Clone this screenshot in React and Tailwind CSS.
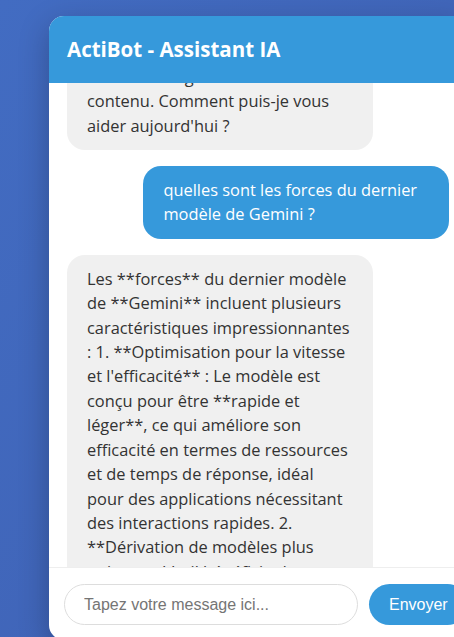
import { useLayoutEffect, useRef } from "react";

const messages = [
  {
    from: "bot",
    text: "Bonjour ! Je suis ActiBot, votre assistant spécialisé en intelligence artificielle et génération de contenu. Comment puis-je vous aider aujourd'hui ?",
  },
  { from: "user", text: "quelles sont les forces du dernier modèle de Gemini ?" },
  {
    from: "bot",
    text: "Les **forces** du dernier modèle de **Gemini** incluent plusieurs caractéristiques impressionnantes : 1. **Optimisation pour la vitesse et l'efficacité** : Le modèle est conçu pour être **rapide et léger**, ce qui améliore son efficacité en termes de ressources et de temps de réponse, idéal pour des applications nécessitant des interactions rapides. 2. **Dérivation de modèles plus puissants** : il bénéficie des avancées des versions plus grandes tout en restant accessible. 3. **Multimodalité** : il comprend le texte, les images et le code.",
  },
];

export default function App() {
  const listRef = useRef(null);
  const firstRef = useRef(null);

  // la liste est déjà défilée : la fin du premier message reste juste sous l'en-tête
  useLayoutEffect(() => {
    const list = listRef.current;
    const first = firstRef.current;
    if (list && first) list.scrollTop = first.offsetTop + first.offsetHeight - 67;
  }, []);

  return (
    <div className="h-screen w-full overflow-hidden bg-gradient-to-br from-[#426cc2] to-[#3f60b2] pt-4 pl-[49px] font-['Open_Sans',sans-serif]">
      <div className="flex h-[624px] w-[418px] flex-col overflow-hidden rounded-[15px] bg-white shadow-[0_10px_30px_rgba(0,0,0,0.25)]">
        {/* En-tête */}
        <div className="flex h-[67px] shrink-0 items-center bg-[#3699db] px-[18px] text-[20.5px] font-bold text-white">
          ActiBot - Assistant IA
        </div>

        {/* Messages */}
        <div
          ref={listRef}
          className="relative flex flex-1 flex-col gap-4 overflow-y-auto p-[18px] [scrollbar-width:none]"
        >
          {messages.map((m, i) =>
            m.from === "user" ? (
              <div
                key={i}
                className="max-w-[80%] self-end rounded-[18px] bg-[#3699db] px-5 py-3 text-[16.4px] leading-[24.4px] text-white"
              >
                {m.text}
              </div>
            ) : (
              <div
                key={i}
                ref={i === 0 ? firstRef : null}
                className="max-w-[80%] self-start rounded-[18px] bg-[#f0f0f0] px-5 py-3 text-[16.4px] leading-[24.4px] text-[#333]"
              >
                {m.text}
              </div>
            )
          )}
        </div>

        {/* Saisie */}
        <div className="flex shrink-0 gap-[11px] border-t border-[#eee] px-[15px] pt-4 pb-[15px] font-['Liberation_Sans',Arial,sans-serif]">
          <input
            type="text"
            placeholder="Tapez votre message ici..."
            className="h-[41px] w-[294px] shrink-0 rounded-full border border-[#ddd] px-[19px] text-base text-[#333] outline-none placeholder:text-[#757575]"
          />
          <button className="h-[41px] shrink-0 rounded-full bg-[#3699db] px-5 text-base text-white">
            Envoyer
          </button>
        </div>
      </div>
    </div>
  );
}
